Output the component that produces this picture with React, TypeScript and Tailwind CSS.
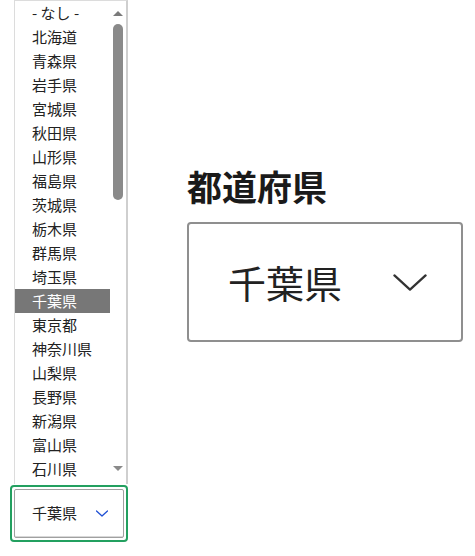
import React from "react"

const prefs = [
  "- なし -",
  "北海道",
  "青森県",
  "岩手県",
  "宮城県",
  "秋田県",
  "山形県",
  "福島県",
  "茨城県",
  "栃木県",
  "群馬県",
  "埼玉県",
  "千葉県",
  "東京都",
  "神奈川県",
  "山梨県",
  "長野県",
  "新潟県",
  "富山県",
  "石川県",
]

const font = { fontFamily: '"Noto Sans CJK JP", "Noto Sans", sans-serif' }

function Chevron({ className, width = 1.6 }: { className?: string; width?: number }) {
  return (
    <svg viewBox="0 0 24 12" fill="none" className={className}>
      <path d="M1 1 L12 11 L23 1" stroke="currentColor" strokeWidth={width} strokeLinecap="round" strokeLinejoin="round" />
    </svg>
  )
}

function OptionList() {
  return (
    <div className="ml-[14px] flex h-[484px] w-[114px] border-l border-t border-r-2 border-l-[#dcdcdc] border-t-[#dcdcdc] border-r-[#cfcfcf] bg-white">
      <ul className="w-[95px]">
        {prefs.map((p) => {
          const selected = p === "千葉県"
          return (
            <li
              key={p}
              className={
                selected
                  ? "h-[24px] pl-[17px] flex items-center text-[15px] text-white bg-[#777777]"
                  : "h-[24px] pl-[17px] flex items-center text-[15px] text-[#222222]"
              }
            >
              {p}
            </li>
          )
        })}
      </ul>
      <div className="flex-1 flex flex-col items-center pt-[10px] pb-[13px]">
        <div className="w-0 h-0 border-x-[5px] border-x-transparent border-b-[5px] border-b-[#7a7a7a]" />
        <div className="mt-[8px] h-[176px] w-[10px] rounded-full bg-[#8a8a8a]" />
        <div className="flex-1" />
        <div className="w-0 h-0 border-x-[5px] border-x-transparent border-t-[5px] border-t-[#8a8a8a]" />
      </div>
    </div>
  )
}

function SmallSelect() {
  return (
    <div className="ml-[10px] mt-px h-[57px] w-[118px] rounded-[4px] border-2 border-[#23a060] p-[2px]">
      <div className="flex h-full items-center rounded-[2px] border border-[#a0a0a0] shadow-[inset_0_-1px_0_#d8d8d8] pl-[17px] pr-[15px]">
        <span className="text-[15px] text-[#222222]">千葉県</span>
        <Chevron width={2.6} className="ml-auto w-[12px] h-[7px] text-[#1f4fd4]" />
      </div>
    </div>
  )
}

export default function App() {
  return (
    <div className="flex w-[475px] h-[556px] bg-white overflow-hidden" style={font}>
      <div className="w-[140px] flex flex-col">
        <OptionList />
        <SmallSelect />
      </div>
      <div className="ml-[47px] pt-[166px]">
        <h2 className="text-[35px] font-bold leading-[40px] text-[#1a1a1a]">都道府県</h2>
        <div className="mt-[16px] flex h-[120px] w-[276px] items-center rounded-[4px] border-2 border-[#8f8f8f] pl-[39px] pr-[34px]">
          <span className="text-[38px] text-[#222222] leading-none">千葉県</span>
          <Chevron className="ml-auto w-[34px] h-[17px] text-[#333333]" />
        </div>
      </div>
    </div>
  )
}
